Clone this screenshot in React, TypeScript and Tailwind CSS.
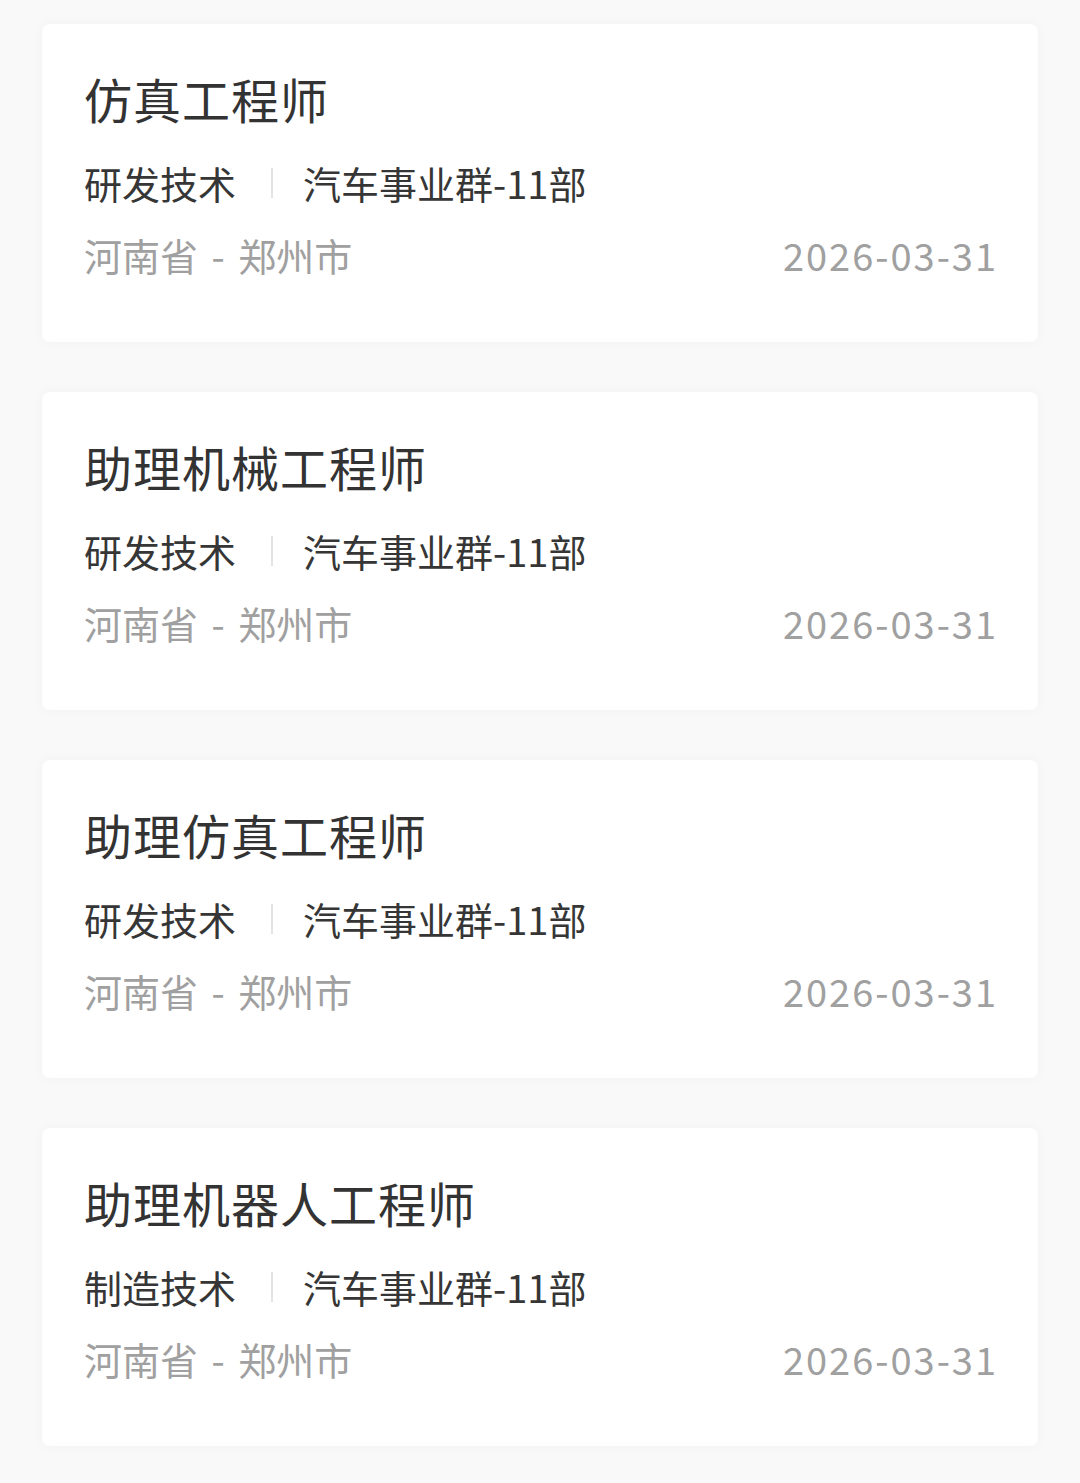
const jobs = [
  { title: '仿真工程师', category: '研发技术' },
  { title: '助理机械工程师', category: '研发技术' },
  { title: '助理仿真工程师', category: '研发技术' },
  { title: '助理机器人工程师', category: '制造技术' },
];

function JobCard({ title, category }: { title: string; category: string }) {
  return (
    <div className="h-[318px] rounded-lg bg-white px-[42px] pt-[46px] shadow-[0_0_14px_rgba(0,0,0,0.035)]">
      <div className="text-[48px] leading-[56px] tracking-[1px] text-[#333333]">{title}</div>
      <div className="mt-[33px] flex items-center text-[38px] leading-[48px] text-[#363636]">
        <span>{category}</span>
        <span className="ml-[35px] mr-[30px] h-[30px] w-[2px] bg-[#e3e3e3]" />
        <span>汽车事业群-11部</span>
      </div>
      <div className="mt-6 flex items-center justify-between text-[38px] leading-[48px] text-[#a0a0a0]">
        <span className="[word-spacing:5px]">河南省 - 郑州市</span>
        <span className="-mr-[2px] tracking-[2px]">2026-03-31</span>
      </div>
    </div>
  );
}

export default function App() {
  return (
    <div
      className="min-h-[1483px] bg-[#f9f9f9] px-[42px] pt-[24px]"
      style={{ fontFamily: '"Noto Sans CJK SC", "Noto Sans", sans-serif' }}
    >
      <div className="flex flex-col gap-[50px]">
        {jobs.map((job) => (
          <JobCard key={job.title} title={job.title} category={job.category} />
        ))}
      </div>
    </div>
  );
}
